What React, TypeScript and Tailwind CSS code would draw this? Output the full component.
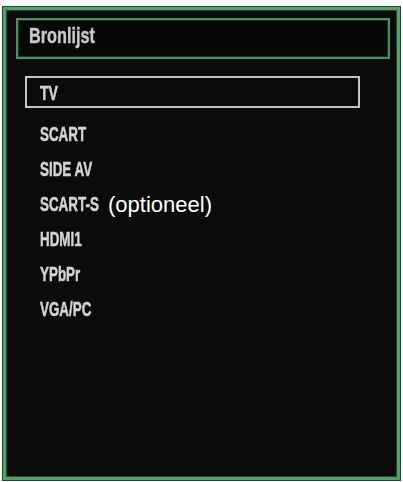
import React from 'react';

const sources = [
  { id: 'scart', label: 'SCART' },
  { id: 'side-av', label: 'SIDE AV' },
  { id: 'scart-s', label: 'SCART-S', note: '(optioneel)' },
  { id: 'hdmi1', label: 'HDMI1' },
  { id: 'ypbpr', label: 'YPbPr' },
  { id: 'vga', label: 'VGA/PC' }
];

// condensed TV-menu lettering: Liberation Sans Bold squeezed horizontally
function MenuLabel({ text, size = 'text-[20px]' }: { text: string; size?: string }) {
  return (
    <span
      className={`inline-block origin-left scale-x-[0.67] whitespace-nowrap font-bold leading-none text-[#d4d4d4] blur-[0.4px] [-webkit-text-stroke:0.5px_#d4d4d4] ${size}`}
      style={{ fontFamily: '"Liberation Sans", Arial, sans-serif' }}
    >
      {text}
    </span>
  );
}

export default function App() {
  return (
    <div className="h-[482px] w-[403px] bg-white pl-[3px] pt-[7px]">
      <div className="flex h-[473px] w-[397px] flex-col border-[3px] border-[#55a06c] bg-[#0b0b0b] shadow-[0_0_0_1px_#1d4a2c,inset_0_0_0_1px_#1d4a2c]">
        {/* header */}
        <div className="ml-[10px] mr-[7px] mt-[8px] flex h-[41px] items-center border-2 border-[#4c8f61] bg-[#080808] pb-[5px] pl-[11px] shadow-[inset_0_0_0_1px_#173522]">
          <span
            className="inline-block origin-left scale-x-[0.74] whitespace-nowrap text-[22px] font-bold leading-none text-[#c9c9c9] blur-[0.4px] [-webkit-text-stroke:0.4px_#c9c9c9]"
            style={{ fontFamily: '"Liberation Sans", Arial, sans-serif' }}
          >
            Bronlijst
          </span>
        </div>

        {/* selected source */}
        <div className="ml-[19px] mt-[17px] flex h-[32px] w-[335px] items-center border-2 border-[#c6c6c6] pl-[13px]">
          <MenuLabel text="TV" size="text-[21px]" />
        </div>

        {/* source list */}
        <ul className="ml-[34px] mt-[9px] flex flex-col">
          {sources.map(s => (
            <li key={s.id} className="flex h-[35px] items-center">
              <span className="w-[68px] shrink-0">
                <MenuLabel text={s.label} />
              </span>
              {s.note && (
                <span
                  className="text-[22px] leading-none text-white"
                  style={{ fontFamily: '"Liberation Sans", Arial, sans-serif' }}
                >
                  {s.note}
                </span>
              )}
            </li>
          ))}
        </ul>
      </div>
    </div>
  );
}
